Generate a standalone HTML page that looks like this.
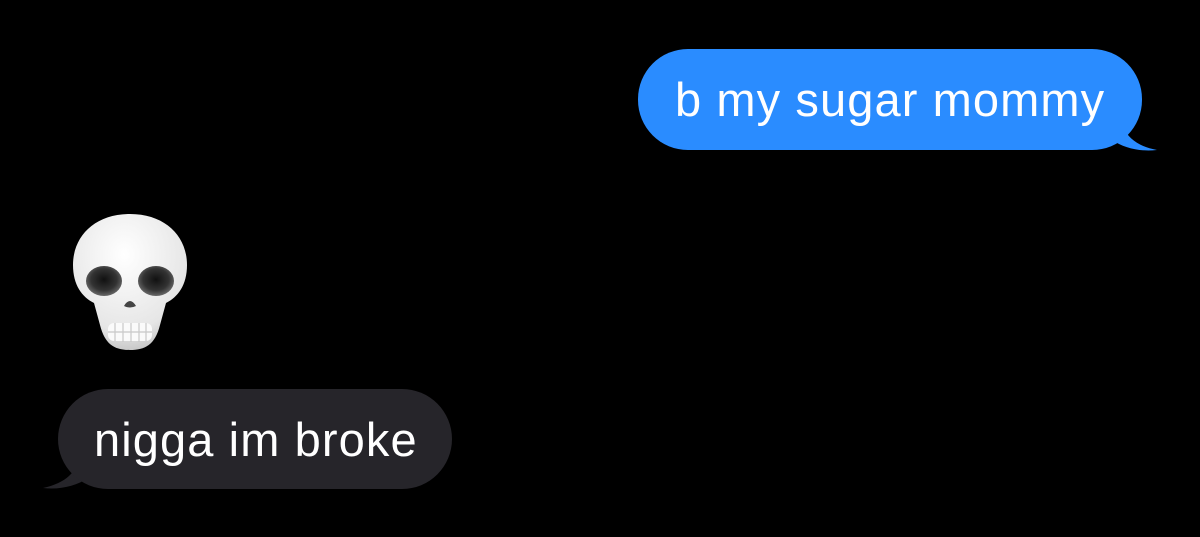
<!DOCTYPE html>
<html><head><style>
html,body{margin:0;background:#000;width:1200px;height:537px;overflow:hidden;position:relative;font-family:"Liberation Sans",Arial,sans-serif}
.b{position:absolute;color:#fff;font-size:47px;letter-spacing:1.1px;line-height:101px;white-space:nowrap}
</style></head><body>
<svg width="1200" height="537" style="position:absolute;left:0;top:0">
<path d="M1120,118 C1124,135 1135,146 1157,150 C1140,152 1124,148 1112,140 Z" fill="#2a8cff"/>
<rect x="638" y="49" width="504" height="101" rx="50" fill="#2a8cff"/>
<path d="M80,455 C77,472 66,483 43,488 C60,490 76,486 88,478 Z" fill="#26252a"/>
<rect x="58" y="389" width="394" height="100" rx="50" fill="#26252a"/>
<defs>
<radialGradient id="sk" cx="0.45" cy="0.3" r="0.8"><stop offset="0" stop-color="#fff"/><stop offset="0.7" stop-color="#e6e6e6"/><stop offset="1" stop-color="#b5b5b5"/></radialGradient>
<radialGradient id="ey" cx="0.5" cy="0.45" r="0.6"><stop offset="0" stop-color="#111"/><stop offset="0.6" stop-color="#333"/><stop offset="1" stop-color="#777"/></radialGradient>
</defs>
<path d="M130,214 C165,214 187,236 187,265 C187,285 178,297 166,303 L160,325 C155,345 145,350 130,350 C115,350 105,345 100,325 L94,303 C82,297 73,285 73,265 C73,236 95,214 130,214 Z" fill="url(#sk)"/>
<ellipse cx="104" cy="281" rx="18" ry="15" fill="url(#ey)"/>
<ellipse cx="156" cy="281" rx="18" ry="15" fill="url(#ey)"/>
<path d="M124,306 Q130,296 136,306 Q130,309 124,306Z" fill="#444"/>
<rect x="108" y="323" width="44" height="18" rx="6" fill="#fafafa"/>
<path d="M115,323v18M123,323v19M131,323v19M139,323v19M146,323v18M108,332h44" stroke="#c8c8c8" stroke-width="1.2"/>
</svg>
<div class="b" style="left:675px;top:49px">b my sugar mommy</div>
<div class="b" style="left:94px;top:389px">nigga im broke</div>
</body></html>
